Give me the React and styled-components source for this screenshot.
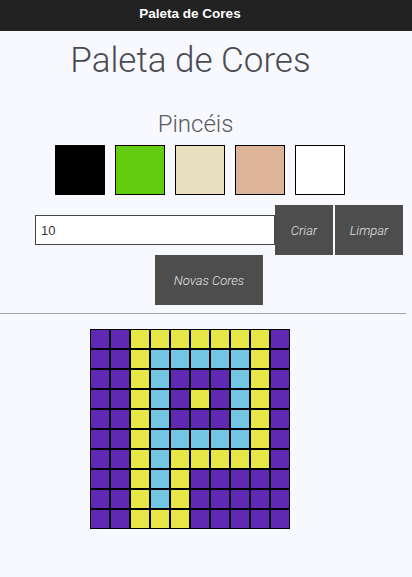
import styled, { createGlobalStyle } from "styled-components";

const P = "#5f29b3";
const Y = "#e6e646";
const B = "#72c5e3";

const rows = [
  "PPYYYYYYYP",
  "PPYBBBBBYP",
  "PPYBPPPBYP",
  "PPYBPYPBYP",
  "PPYBPPPBYP",
  "PPYBBBBBYP",
  "PPYBYYYYYP",
  "PPYBYPPPPP",
  "PPYBYPPPPP",
  "PPYYYPPPPP",
];

const colorOf = { P, Y, B };

const brushes = ["#000000", "#64cc0f", "#e9e0c0", "#ddb497", "#ffffff"];

const App = () => {
  return (
    <>
      <GlobalStyle />
      <TopBar>Paleta de Cores</TopBar>
      <Title>Paleta de Cores</Title>
      <Subtitle>Pincéis</Subtitle>
      <Palette>
        {brushes.map((c) => (
          <Swatch key={c} $color={c} />
        ))}
      </Palette>
      <Controls>
        <SizeInput type="text" defaultValue="10" />
        <ActionButton $width={58}>Criar</ActionButton>
        <ActionButton $width={68}>Limpar</ActionButton>
      </Controls>
      <NewColorsRow>
        <ActionButton $width={108}>Novas Cores</ActionButton>
      </NewColorsRow>
      <Divider />
      <Board>
        {rows.map((row, r) =>
          row.split("").map((k, c) => <Pixel key={`${r}-${c}`} $color={colorOf[k]} />)
        )}
      </Board>
    </>
  );
};

export default App;

const GlobalStyle = createGlobalStyle`
  * { box-sizing: border-box; }
  body {
    margin: 0;
    background: #f8f9fe;
    font-family: Roboto, "Liberation Sans", sans-serif;
  }
`;

const TopBar = styled.div`
  height: 31px;
  background: #222222;
  color: #ffffff;
  font-family: "Liberation Sans", Arial, sans-serif;
  font-weight: bold;
  font-size: 13.5px;
  display: flex;
  align-items: center;
  justify-content: center;
  padding-right: 32px;
  padding-bottom: 5px;
`;

const Title = styled.h1`
  margin: 12px 0 0;
  padding-right: 31px;
  text-align: center;
  font-size: 35px;
  line-height: 35px;
  font-weight: 300;
  color: #4a4a52;
`;

const Subtitle = styled.h2`
  margin: 34px 0 0;
  padding-right: 21px;
  text-align: center;
  font-size: 24px;
  line-height: 24px;
  font-weight: 300;
  color: #5a5a60;
`;

const Palette = styled.div`
  display: flex;
  justify-content: center;
  gap: 10px;
  margin-top: 9px;
  padding-right: 12px;
`;

const Swatch = styled.div`
  width: 50px;
  height: 50px;
  border: 1px solid #000000;
  background: ${(p) => p.$color};
`;

const Controls = styled.div`
  display: flex;
  align-items: center;
  gap: 2px;
  margin-top: 10px;
  padding-left: 35px;
  & > input {
    margin-right: -2px;
  }
`;

const SizeInput = styled.input`
  width: 240px;
  height: 30px;
  border: 1px solid #444444;
  background: #ffffff;
  padding: 0 5px;
  font-family: "Liberation Sans", Arial, sans-serif;
  font-size: 13px;
  color: #333333;
  outline: none;
`;

const ActionButton = styled.button`
  width: ${(p) => p.$width}px;
  height: 50px;
  border: none;
  background: #4d4d4d;
  color: #e2e2e2;
  font-family: Roboto, sans-serif;
  font-style: italic;
  font-weight: 300;
  font-size: 13px;
  padding: 0;
`;

const NewColorsRow = styled.div`
  display: flex;
  padding-left: 155px;
`;

const Divider = styled.hr`
  width: 406px;
  margin: 8px 0 0;
  border: none;
  border-top: 1px solid #a3a3a3;
  height: 0;
`;

const Board = styled.div`
  display: flex;
  flex-wrap: wrap;
  width: 200px;
  margin: 15px 0 0 90px;
`;

const Pixel = styled.div`
  width: 20px;
  height: 20px;
  border: 1px solid #000000;
  background: ${(p) => p.$color};
`;
